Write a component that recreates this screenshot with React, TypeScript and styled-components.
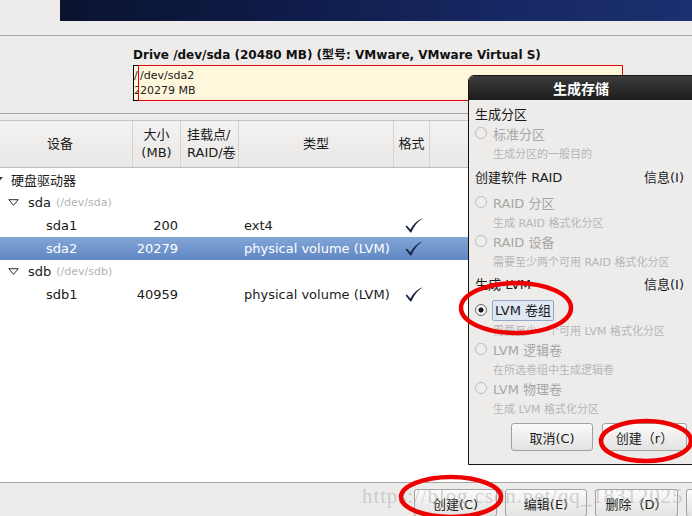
import React from "react";
import styled, { createGlobalStyle, css } from "styled-components";

const FONT = `"DejaVu Sans", "Noto Sans CJK SC", sans-serif`;

const GlobalStyle = createGlobalStyle`
  *, *::before, *::after { box-sizing: border-box; }
  html, body { margin: 0; padding: 0; }
  body { width: 692px; height: 516px; overflow: hidden; background: #edeceb; font-family: ${FONT}; }
`;

const Screen = styled.div`
  position: relative;
  width: 692px;
  height: 516px;
  overflow: hidden;
  background: #edeceb;
  display: flex;
  flex-direction: column;
  font-family: ${FONT};
  color: #1a1a1a;
`;

const TopBar = styled.div`
  flex: none;
  height: 36px;
  border-bottom: 1px solid #a6a6a6;
`;

const Banner = styled.div`
  margin-left: 60px;
  height: 21px;
  background: linear-gradient(90deg, #0a1330 0%, #0f1b48 35%, #162863 70%, #1b306f 100%);
`;

const DriveSection = styled.div`
  flex: none;
  height: 78px;
  border-bottom: 1px solid #a6a6a6;
  padding: 11px 0 0 133px;
`;

const DriveTitle = styled.div`
  font-size: 12px;
  font-weight: bold;
  line-height: 16px;
  white-space: nowrap;
  color: #111;
`;

const PartitionBar = styled.div`
  margin-top: 2px;
  width: 490px;
  height: 36px;
  display: flex;
  background: #fff7dc;
`;

const Part = styled.div<{ $tone: "black" | "red"; $w?: number }>`
  ${(p) => (p.$w ? css`width: ${p.$w}px; flex: none;` : css`flex: 1;`)}
  height: 100%;
  overflow: hidden;
  padding: 2px 0 0 1px;
  font-size: 11px;
  line-height: 15px;
  white-space: nowrap;
  color: #222;
  border: 1px solid ${(p) => (p.$tone === "red" ? "#e8000b" : "#000")};
  ${(p) => p.$tone === "black" && css`border-right: none; padding-left: 0;`}
`;

const Table = styled.div`
  flex: 1;
  margin-top: 6px;
  background: #fff;
  border-top: 1px solid #c4c4c4;
  display: flex;
  flex-direction: column;
`;

const COLS = "133px 48px 58px 155px 36px 1fr";

const HeaderRow = styled.div`
  display: grid;
  grid-template-columns: ${COLS};
  height: 47px;
  background: linear-gradient(#f3f2f1, #e9e8e7);
  border-bottom: 1px solid #bdbdbd;
`;

const HeaderCell = styled.div<{ $align?: "center" | "left"; $shift?: number }>`
  display: flex;
  flex-direction: column;
  justify-content: center;
  align-items: ${(p) => (p.$align === "left" ? "flex-start" : "center")};
  padding-left: ${(p) => (p.$align === "left" ? "6px" : "0")};
  padding-right: ${(p) => p.$shift ?? 0}px;
  border-right: 1px solid #d3d2d1;
  font-size: 13px;
  line-height: 18px;
  color: #1a1a1a;
  white-space: nowrap;
  &:last-child { border-right: none; }
`;

const Row = styled.div<{ $selected?: boolean }>`
  display: grid;
  grid-template-columns: ${COLS};
  height: 23px;
  align-items: center;
  font-size: 13px;
  white-space: nowrap;
  color: ${(p) => (p.$selected ? "#fff" : "#1a1a1a")};
  background: ${(p) => (p.$selected ? "linear-gradient(#84a6d8, #5f87c1)" : "transparent")};
`;

const NameCell = styled.div<{ $indent: number }>`
  display: flex;
  align-items: center;
  padding-left: ${(p) => p.$indent}px;
`;

const Expander = styled.svg<{ $gap: number }>`
  flex: none;
  margin-right: ${(p) => p.$gap}px;
`;

const DevPath = styled.span`
  margin-left: 5px;
  font-size: 11px;
  color: #b3b3b3;
`;

const SizeCell = styled.div`
  text-align: right;
  padding-right: 3px;
`;

const TypeCell = styled.div`
  padding-left: 5px;
`;

const CheckCell = styled.div`
  padding-left: 11px;
  display: flex;
  align-items: center;
`;

const BottomBar = styled.div`
  flex: none;
  height: 34px;
  border-top: 1px solid #a6a6a6;
  padding: 6px 0 0 414px;
  display: flex;
  gap: 8px;
`;

const Button = styled.div<{ $w: number }>`
  flex: none;
  width: ${(p) => p.$w}px;
  height: 28px;
  border: 1px solid #a2a2a2;
  border-radius: 3px;
  background: linear-gradient(#fbfbfb, #e3e2e1);
  display: flex;
  align-items: center;
  justify-content: center;
  font-size: 13px;
  color: #1a1a1a;
  white-space: nowrap;
`;

const Dialog = styled.div`
  position: absolute;
  left: 468px;
  top: 75px;
  width: 232px;
  height: 390px;
  border: 1px solid #151515;
  border-top-left-radius: 6px;
  background: #edeceb;
  overflow: hidden;
  display: flex;
  flex-direction: column;
`;

const DialogTitle = styled.div`
  height: 24px;
  flex: none;
  background: linear-gradient(#3c3c3c, #1c1c1c);
  color: #fff;
  font-weight: bold;
  font-size: 14px;
  display: flex;
  align-items: center;
  justify-content: center;
  padding-right: 6px;
`;

const DialogBody = styled.div`
  padding: 3px 15px 0 6px;
  display: flex;
  flex-direction: column;
`;

const Heading = styled.div<{ $mt?: number }>`
  height: 20px;
  margin-top: ${(p) => p.$mt ?? 0}px;
  display: flex;
  align-items: center;
  justify-content: space-between;
  font-size: 13px;
  color: #1a1a1a;
  white-space: nowrap;
`;

const RadioRow = styled.div<{ $mt?: number; $disabled?: boolean }>`
  height: 20px;
  margin-top: ${(p) => p.$mt ?? 0}px;
  display: flex;
  align-items: center;
  gap: 6px;
  font-size: 13px;
  white-space: nowrap;
  color: ${(p) => (p.$disabled ? "#a6a6a6" : "#1a1a1a")};
`;

const RadioCircle = styled.span<{ $checked?: boolean }>`
  flex: none;
  width: 12px;
  height: 12px;
  border-radius: 50%;
  border: 1px solid ${(p) => (p.$checked ? "#6a6a6a" : "#bdbdbd")};
  background: ${(p) => (p.$checked ? "radial-gradient(circle, #1a1a1a 0 2.3px, #f4f4f4 2.8px)" : "#efeeed")};
`;

const RadioLabel = styled.span<{ $focused?: boolean }>`
  ${(p) =>
    p.$focused &&
    css`
      margin-left: -1px;
      padding: 0 2px;
      height: 21px;
      line-height: 19px;
      border: 1px solid #93a9c9;
      border-radius: 2px;
      background: #dfe7f2;
    `}
`;

const Desc = styled.div`
  height: 19px;
  padding-left: 18px;
  display: flex;
  align-items: center;
  font-size: 11px;
  color: #b6b6b6;
  white-space: nowrap;
`;

const DialogButtons = styled.div`
  margin-top: 6px;
  margin-left: 36px;
  display: flex;
  gap: 9px;
`;

const Overlay = styled.svg`
  position: absolute;
  left: 0;
  top: 0;
  pointer-events: none;
`;

const Watermark = styled.div`
  position: absolute;
  left: 362px;
  top: 484px;
  font-family: "Liberation Serif", serif;
  font-size: 21px;
  letter-spacing: 0.9px;
  color: rgba(170, 170, 170, 0.5);
  white-space: nowrap;
  pointer-events: none;
`;

const Check = () => (
  <svg width="17" height="15" viewBox="0 0 17 15">
    <path
      d="M0.6 8.6 L1.9 7.6 L5.4 11.4 C8 6.6 11.6 2.6 16.6 0.4 L16.9 1.1 C12.6 3.6 9.2 8.2 6.3 14.6 L5.3 14.6 Z"
      fill="#1c2744"
    />
  </svg>
);

const OpenTriangle = ({ gap }: { gap: number }) => (
  <Expander $gap={gap} width="11" height="7" viewBox="0 0 11 7">
    <path d="M0.8 0.7 H10.2 L5.5 6.3 Z" fill="none" stroke="#2a2a2a" strokeWidth="1" />
  </Expander>
);

type PartRow = {
  kind: "group" | "disk" | "part";
  name: string;
  path?: string;
  size?: string;
  type?: string;
  fmt?: boolean;
  selected?: boolean;
};

const rows: PartRow[] = [
  { kind: "group", name: "硬盘驱动器" },
  { kind: "disk", name: "sda", path: "(/dev/sda)" },
  { kind: "part", name: "sda1", size: "200", type: "ext4", fmt: true },
  { kind: "part", name: "sda2", size: "20279", type: "physical volume (LVM)", fmt: true, selected: true },
  { kind: "disk", name: "sdb", path: "(/dev/sdb)" },
  { kind: "part", name: "sdb1", size: "40959", type: "physical volume (LVM)", fmt: true },
];

export default function App() {
  return (
    <>
      <GlobalStyle />
      <Screen>
        <TopBar>
          <Banner />
        </TopBar>
        <DriveSection>
          <DriveTitle>Drive /dev/sda (20480 MB) (型号: VMware, VMware Virtual S)</DriveTitle>
          <PartitionBar>
            <Part $tone="black" $w={5}>
              /dev/sda1
              <br />
              200 MB
            </Part>
            <Part $tone="red">
              /dev/sda2
              <br />
              20279 MB
            </Part>
          </PartitionBar>
        </DriveSection>
        <Table>
          <HeaderRow>
            <HeaderCell $shift={12}>设备</HeaderCell>
            <HeaderCell>
              <span>大小</span>
              <span>(MB)</span>
            </HeaderCell>
            <HeaderCell $align="left">
              <span>挂载点/</span>
              <span>RAID/卷</span>
            </HeaderCell>
            <HeaderCell>类型</HeaderCell>
            <HeaderCell>格式</HeaderCell>
            <HeaderCell />
          </HeaderRow>
          {rows.map((r) => (
            <Row key={r.name} $selected={r.selected}>
              {r.kind === "group" && (
                <NameCell $indent={0}>
                  <Expander $gap={7} width="4" height="7" viewBox="0 0 4 7">
                    <path d="M-6 1 H3 L-1.5 6 Z" fill="#333" />
                  </Expander>
                  {r.name}
                </NameCell>
              )}
              {r.kind === "disk" && (
                <NameCell $indent={8}>
                  <OpenTriangle gap={9} />
                  {r.name}
                  <DevPath>{r.path}</DevPath>
                </NameCell>
              )}
              {r.kind === "part" && <NameCell $indent={46}>{r.name}</NameCell>}
              <SizeCell>{r.size}</SizeCell>
              <div />
              <TypeCell>{r.type}</TypeCell>
              <CheckCell>{r.fmt && <Check />}</CheckCell>
              <div />
            </Row>
          ))}
        </Table>
        <BottomBar>
          <Button $w={83}>创建(C)</Button>
          <Button $w={82}>编辑(E)</Button>
          <Button $w={83}>删除（D）</Button>
          <Button $w={82}>重设(s)</Button>
        </BottomBar>

        <Dialog>
          <DialogTitle>生成存储</DialogTitle>
          <DialogBody>
            <Heading>生成分区</Heading>
            <RadioRow $disabled>
              <RadioCircle />
              <RadioLabel>标准分区</RadioLabel>
            </RadioRow>
            <Desc>生成分区的一般目的</Desc>

            <Heading $mt={4}>
              <span>创建软件 RAID</span>
              <span>信息(I)</span>
            </Heading>
            <RadioRow $mt={6} $disabled>
              <RadioCircle />
              <RadioLabel>RAID 分区</RadioLabel>
            </RadioRow>
            <Desc>生成 RAID 格式化分区</Desc>
            <RadioRow $disabled>
              <RadioCircle />
              <RadioLabel>RAID 设备</RadioLabel>
            </RadioRow>
            <Desc>需要至少两个可用 RAID 格式化分区</Desc>

            <Heading $mt={3}>
              <span>生成 LVM</span>
              <span>信息(I)</span>
            </Heading>
            <RadioRow $mt={7}>
              <RadioCircle $checked />
              <RadioLabel $focused>LVM 卷组</RadioLabel>
            </RadioRow>
            <Desc>需要至少一个可用 LVM 格式化分区</Desc>
            <RadioRow $disabled>
              <RadioCircle />
              <RadioLabel>LVM 逻辑卷</RadioLabel>
            </RadioRow>
            <Desc>在所选卷组中生成逻辑卷</Desc>
            <RadioRow $disabled>
              <RadioCircle />
              <RadioLabel>LVM 物理卷</RadioLabel>
            </RadioRow>
            <Desc>生成 LVM 格式化分区</Desc>

            <DialogButtons>
              <Button $w={82}>取消(C)</Button>
              <Button $w={85}>创建（r）</Button>
            </DialogButtons>
          </DialogBody>
        </Dialog>

        <Watermark>https://blog.csdn.net/qq_18312025</Watermark>

        <Overlay width="692" height="516" viewBox="0 0 692 516">
          <g fill="none" stroke="#ee0000" strokeWidth="4.5">
            <ellipse cx="516" cy="308" rx="55" ry="25" />
            <ellipse cx="646" cy="441" rx="45" ry="20" />
            <ellipse cx="451" cy="497" rx="50" ry="20" />
          </g>
        </Overlay>
      </Screen>
    </>
  );
}
